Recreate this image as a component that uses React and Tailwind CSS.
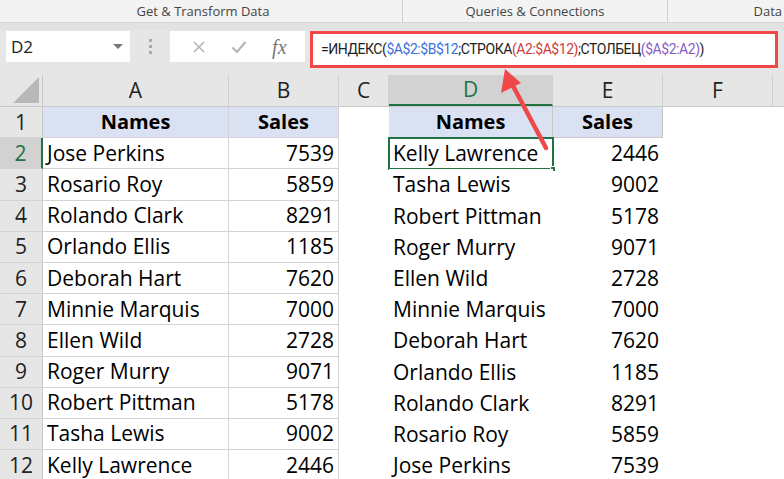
import React from "react";

const left = [
  ["Jose Perkins", 7539],
  ["Rosario Roy", 5859],
  ["Rolando Clark", 8291],
  ["Orlando Ellis", 1185],
  ["Deborah Hart", 7620],
  ["Minnie Marquis", 7000],
  ["Ellen Wild", 2728],
  ["Roger Murry", 9071],
  ["Robert Pittman", 5178],
  ["Tasha Lewis", 9002],
  ["Kelly Lawrence", 2446],
];

const right = [...left].reverse();

const font = { fontFamily: "'Open Sans', Lato, sans-serif" };

function ColHead({ w, label, selected }) {
  return (
    <div
      className={`h-full flex items-center justify-center border-r border-[#d0d0d0] text-[21px] ${
        selected
          ? "bg-[#d2d2d2] text-[#217346] border-b-2 border-b-[#217346]"
          : "text-[#222]"
      }`}
      style={{ width: w }}
    >
      {label}
    </div>
  );
}

export default function App() {
  return (
    <div
      className="w-[784px] h-[479px] overflow-hidden bg-[#e6e6e6] relative text-black"
      style={font}
    >
      {/* ribbon group labels */}
      <div className="h-[22px] bg-[#f3f3f3] flex text-[13px] text-[#444]">
        <div className="w-[403px] flex items-center justify-center border-r border-[#cfcfcf] pl-[4px] pt-[2px]">
          Get &amp; Transform Data
        </div>
        <div className="w-[265px] flex items-center justify-center border-r border-[#cfcfcf] pt-[2px]">
          Queries &amp; Connections
        </div>
        <div className="flex-1 flex items-center justify-end pr-[2px] pt-[2px]">Data</div>
      </div>
      <div className="h-[8px] bg-[#e2e2e2] border-t border-[#d8d8d8]" />

      {/* formula bar */}
      <div className="h-[45px] flex items-start pt-[1px]">
        <div className="ml-[6px] w-[124px] h-[31px] bg-white flex items-center justify-between pl-[5px] pr-[7px] text-[17px] text-[#222]">
          <span>D2</span>
          <span className="w-0 h-0 border-l-[5px] border-r-[5px] border-t-[5px] border-l-transparent border-r-transparent border-t-[#777]" />
        </div>
        <div className="w-[40px] h-[31px] flex flex-col items-center justify-center gap-[3px]">
          <span className="w-[3px] h-[3px] bg-[#aaa]" />
          <span className="w-[3px] h-[3px] bg-[#aaa]" />
          <span className="w-[3px] h-[3px] bg-[#aaa]" />
        </div>
        <div className="w-[135px] h-[31px] bg-white flex items-center justify-around pl-[10px] pr-[6px]">
          <svg width="14" height="14" viewBox="0 0 14 14">
            <path d="M2 2 L12 12 M12 2 L2 12" stroke="#b5b5b5" strokeWidth="1.6" />
          </svg>
          <svg width="16" height="14" viewBox="0 0 16 14">
            <path d="M1.5 7.5 L6 12 L14.5 2" stroke="#b5b5b5" strokeWidth="2.2" fill="none" />
          </svg>
          <span className="text-[20px] italic text-[#777]" style={{ fontFamily: "'Liberation Serif', serif" }}>
            fx
          </span>
        </div>
        <div
          className="ml-[5px] w-[468px] h-[37px] bg-white border-[3px] border-[#f04848] flex items-center pl-[8px] text-[14px] tracking-[-0.45px] text-[#222] whitespace-nowrap"
          style={{ fontFamily: "Roboto, sans-serif" }}
        >
          <span>=ИНДЕКС(</span>
          <span className="text-[#3a6fd8]">$A$2:$B$12</span>
          <span>;СТРОКА</span>
          <span className="text-[#d03b3b]">(A2:$A$12)</span>
          <span>;СТОЛБЕЦ</span>
          <span className="text-[#8b5cc8]">($A$2:A2)</span>
          <span>)</span>
        </div>
      </div>

      {/* column headers */}
      <div className="h-[32px] flex border-b border-[#c8c8c8]">
        <div className="w-[43px] h-full border-r border-[#c8c8c8] flex items-end justify-end pr-[2px] pb-[2px]">
          <svg width="28" height="28" viewBox="0 0 28 28">
            <path d="M27 1 L27 27 L1 27 Z" fill="#b8b8b8" />
          </svg>
        </div>
        <ColHead w={186} label="A" />
        <ColHead w={110} label="B" />
        <ColHead w={50} label="C" />
        <ColHead w={164} label="D" selected />
        <ColHead w={110} label="E" />
        <ColHead w={110} label="F" />
        <div className="flex-1" />
      </div>

      {/* grid rows */}
      <div className="flex flex-col">
        {[null, ...left].map((row, i) => {
          const rowNo = i + 1;
          const header = i === 0;
          const r = header ? null : right[i - 1];
          const sel = rowNo === 2;
          return (
            <div key={i} className="h-[31.2px] flex text-[21px] leading-none">
              <div
                className={`w-[43px] h-full flex items-center justify-center border-b border-[#d4d4d4] text-[21px] ${
                  sel
                    ? "bg-[#d2d2d2] text-[#217346] border-r-2 border-r-[#217346]"
                    : "border-r border-r-[#c8c8c8] text-[#222]"
                }`}
              >
                {rowNo}
              </div>
              {header ? (
                <>
                  <div className="w-[186px] h-full bg-[#d9e1f2] border-r border-b border-[#d4d4d4] flex items-center justify-center font-bold text-[20px]">
                    Names
                  </div>
                  <div className="w-[110px] h-full bg-[#d9e1f2] border-r border-b border-[#d4d4d4] flex items-center justify-center font-bold text-[20px]">
                    Sales
                  </div>
                  <div className="w-[50px] h-full bg-white" />
                  <div className="w-[164px] h-full bg-[#d9e1f2] border-r border-b border-[#c8c8c8] flex items-center justify-center font-bold text-[20px]">
                    Names
                  </div>
                  <div className="w-[110px] h-full bg-[#d9e1f2] border-r border-b border-[#c8c8c8] flex items-center justify-center font-bold text-[20px]">
                    Sales
                  </div>
                  <div className="flex-1 h-full bg-white" />
                </>
              ) : (
                <>
                  <div className="w-[186px] h-full bg-white border-r border-b border-[#d4d4d4] flex items-center pl-[4px]">
                    {row[0]}
                  </div>
                  <div className="w-[110px] h-full bg-white border-r border-b border-[#d4d4d4] flex items-center justify-end pr-[4px]">
                    {row[1]}
                  </div>
                  <div className="w-[50px] h-full bg-white" />
                  <div className="relative w-[164px] h-full bg-white flex items-center pl-[4px]">
                    {r[0]}
                    {sel && (
                      <div className="absolute -left-[1px] -top-[1px] w-[166px] h-[33px] border-2 border-[#217346]">
                        <div className="absolute -right-[4px] -bottom-[4px] w-[6px] h-[6px] bg-[#217346] border border-white" />
                      </div>
                    )}
                  </div>
                  <div className="w-[110px] h-full bg-white flex items-center justify-end pr-[4px]">
                    {r[1]}
                  </div>
                  <div className="flex-1 h-full bg-white" />
                </>
              )}
            </div>
          );
        })}
      </div>

      {/* red arrow */}
      <svg className="absolute left-0 top-0 pointer-events-none" width="784" height="479">
        <line x1="546" y1="148" x2="512" y2="84" stroke="#f04848" strokeWidth="4.5" strokeLinecap="round" />
        <path d="M505 69 L501 93 L521 83 Z" fill="#f04848" />
      </svg>
    </div>
  );
}
